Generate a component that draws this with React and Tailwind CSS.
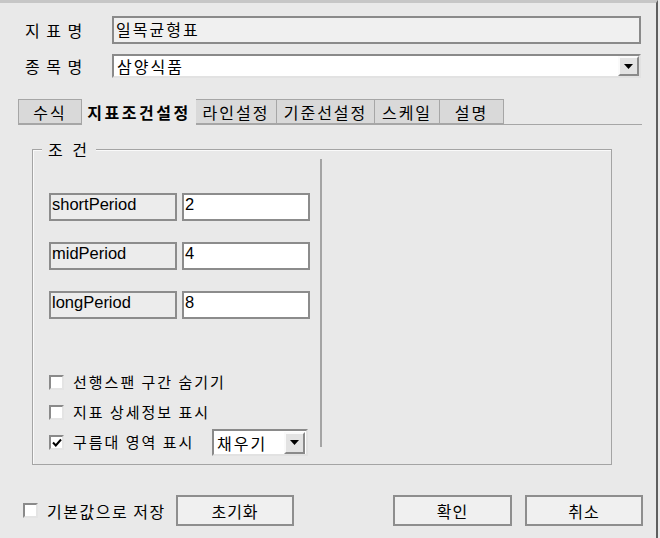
import React from 'react'

const KR = { fontFamily: '"Noto Sans CJK KR", "Noto Sans", sans-serif' }

function Arrow() {
    return (
        <svg width="9" height="5" viewBox="0 0 9 5">
            <path d="M0 0 L9 0 L4.5 5 Z" fill="#000" />
        </svg>
    )
}

function DropButton({ className }) {
    return (
        <div className={`flex items-center justify-center bg-[#e3e3e3] border-2 border-t-[#fafafa] border-l-[#fafafa] border-b-[#8a8a8a] border-r-[#8a8a8a] ${className}`}>
            <Arrow />
        </div>
    )
}

function CheckBox({ checked }) {
    return (
        <div className="w-[15px] h-[15px] shrink-0 bg-white border-2 border-t-[#8a8a8a] border-l-[#8a8a8a] border-b-[#e4e4e4] border-r-[#e4e4e4] flex items-center justify-center">
            {checked && (
                <svg width="10" height="9" viewBox="0 0 10 9">
                    <path d="M1 4.5 L3.8 7.5 L9 1.5" fill="none" stroke="#000" strokeWidth="2" />
                </svg>
            )}
        </div>
    )
}

function Button({ label, className }) {
    return (
        <button type="button" className={`h-[31px] shrink-0 bg-[#f0f0f0] border-2 border-[#8e8e8e] text-[16px] tracking-[1px] text-black ${className}`} style={KR}>
            {label}
        </button>
    )
}

function ParamRow({ name, value }) {
    return (
        <div className="flex gap-[5px]">
            <div className="w-[128px] h-[28px] bg-[#ececec] border-2 border-[#8c8c8c] pl-[1px] leading-[18px] text-[16.5px] font-['Liberation_Sans',sans-serif]">
                {name}
            </div>
            <div className="w-[128px] h-[28px] bg-white border-2 border-[#8c8c8c] pl-[1px] leading-[18px] text-[16.5px] font-['Liberation_Sans',sans-serif]">
                {value}
            </div>
        </div>
    )
}

const tabs = ['수식', '지표조건설정', '라인설정', '기준선설정', '스케일', '설명']
const tabWidths = ['w-[64px]', 'w-[114px]', 'w-[81px]', 'w-[98px]', 'w-[65px]', 'w-[64px]']

export default function App() {
    return (
        <div className="w-[660px] h-[538px] bg-[#e9e9e9] flex text-black whitespace-nowrap" style={KR}>
            <div className="w-[658px] h-full border-t-[3px] border-t-[#c6c6c6] border-r-2 border-r-[#5e5e5e] flex flex-col">
                {/* 지표명 */}
                <div className="mt-[13px] flex items-center">
                    <div className="w-[112px] pl-[25px] text-[16px] tracking-[1.5px]">지 표 명</div>
                    <div className="w-[529px] h-[28px] bg-[#f0f0f0] border-2 border-[#8a8a8a] pl-[2px] text-[16px] tracking-[2px] leading-[22px]">
                        일목균형표
                    </div>
                </div>

                {/* 종목명 */}
                <div className="mt-[10px] flex items-center">
                    <div className="w-[112px] pl-[25px] text-[16px] tracking-[1.5px]">종 목 명</div>
                    <div className="w-[529px] h-[24px] bg-white border-2 border-t-[#8a8a8a] border-l-[#8a8a8a] border-b-[#e2e2e2] border-r-[#e2e2e2] pl-[3px] flex items-center justify-between text-[16px]">
                        <span className="leading-[20px] tracking-[2px]">삼양식품</span>
                        <DropButton className="w-[21px] h-[20px]" />
                    </div>
                </div>

                {/* tabs */}
                <div className="mt-[21px] ml-[18px] w-[624px] h-[26px] flex border-b border-[#a6a6a6]">
                    {tabs.map((t, i) => (
                        <div
                            key={t}
                            className={
                                i === 1
                                    ? `${tabWidths[i]} h-[26px] bg-[#e9e9e9] flex items-center justify-center text-[16px] tracking-[2.5px] font-bold`
                                    : `${tabWidths[i]} h-[25px] bg-[#d9d9d9] border border-[#a6a6a6] border-l-0 first:border-l flex items-center justify-center text-[16px] tracking-[2px]`
                            }
                        >
                            {t}
                        </div>
                    ))}
                </div>

                {/* 조건 group */}
                <div className="relative mt-[24px] ml-[32px] w-[580px] h-[316px] border border-[#a4a4a4] shadow-[inset_1px_1px_0_#fafafa]">
                    <span className="absolute -top-[12px] left-[9px] px-[6px] bg-[#e9e9e9] text-[16px] tracking-[3px] leading-[22px]">조 건</span>
                    <div className="mt-[9px] w-[289px] h-[288px] border-r-2 border-r-[#a4a4a4] pl-[16px] pt-[34px] flex flex-col">
                        <div className="flex flex-col gap-[21px]">
                            <ParamRow name="shortPeriod" value="2" />
                            <ParamRow name="midPeriod" value="4" />
                            <ParamRow name="longPeriod" value="8" />
                        </div>
                        <div className="mt-[56px] flex flex-col gap-[15px] text-[15px] tracking-[2px]">
                            <div className="flex items-center gap-[9px] h-[15px]">
                                <CheckBox />
                                <span>선행스팬 구간 숨기기</span>
                            </div>
                            <div className="flex items-center gap-[9px] h-[15px]">
                                <CheckBox />
                                <span>지표 상세정보 표시</span>
                            </div>
                            <div className="flex items-center h-[15px]">
                                <CheckBox checked />
                                <span className="ml-[9px] w-[139px]">구름대 영역 표시</span>
                                <div className="w-[96px] h-[27px] bg-white border-2 border-t-[#8a8a8a] border-l-[#8a8a8a] border-b-[#e2e2e2] border-r-[#e2e2e2] flex items-center justify-between pl-[3px] pr-[1px] text-[16px]">
                                    <span>채우기</span>
                                    <DropButton className="w-[21px] h-[22px]" />
                                </div>
                            </div>
                        </div>
                    </div>
                </div>

                {/* bottom row */}
                <div className="mt-[30px] flex items-center">
                    <div className="ml-[23px] w-[143px] shrink-0 flex items-center gap-[9px] text-[16px] tracking-[1.5px]">
                        <CheckBox />
                        <span>기본값으로 저장</span>
                    </div>
                    <Button label="초기화" className="ml-[10px] w-[118px]" />
                    <Button label="확인" className="ml-[99px] w-[119px]" />
                    <Button label="취소" className="ml-[13px] w-[118px]" />
                </div>
            </div>
        </div>
    )
}
